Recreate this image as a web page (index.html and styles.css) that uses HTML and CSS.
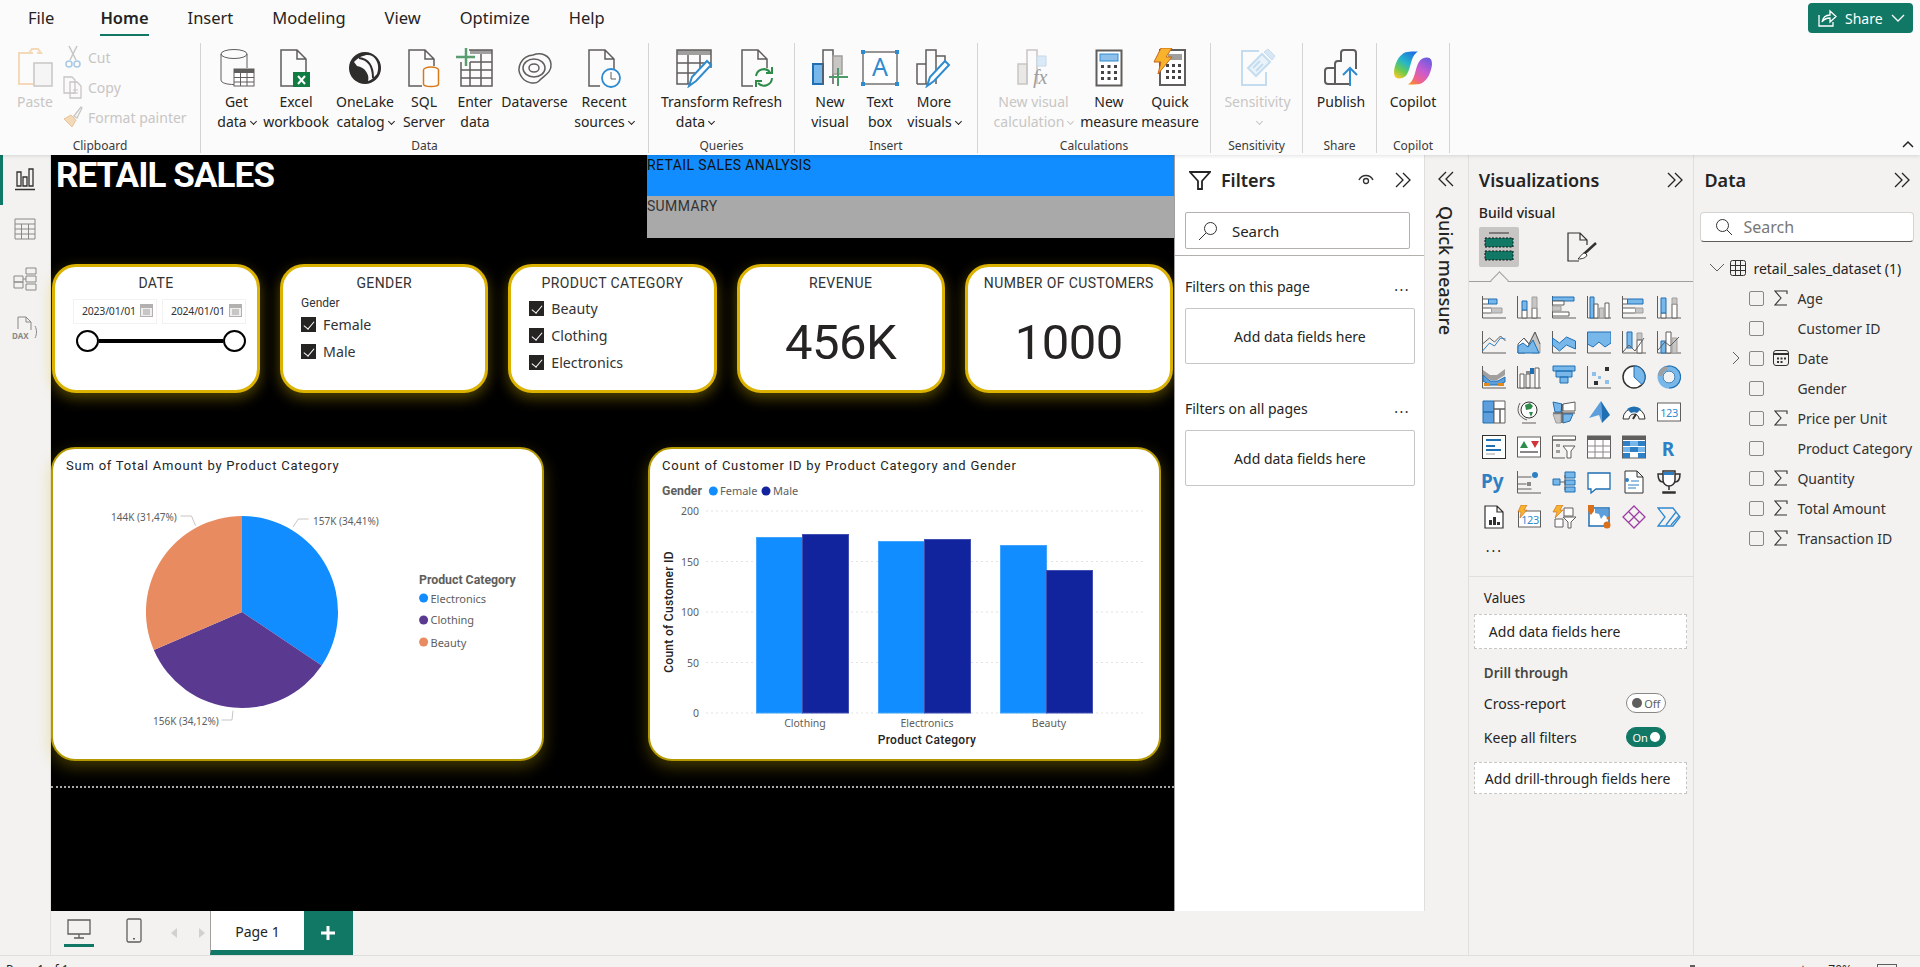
FILE: index.html
```html
<!DOCTYPE html>
<html lang="en">

<head>
  <meta charset="UTF-8">
  <title>Retail Sales - Power BI Desktop</title>
  <link rel="stylesheet" href="styles.css">
</head>

<body>
  <header class="ribbon">
    <nav class="tabs">
      <span class="tab tab-file">File</span>
      <span class="tab tab-active">Home</span>
      <span class="tab">Insert</span>
      <span class="tab">Modeling</span>
      <span class="tab">View</span>
      <span class="tab">Optimize</span>
      <span class="tab">Help</span>
      <button class="share">
        <svg width="20" height="20" viewBox="0 0 20 20"><path d="M2 7v11h14v-4M5 14c1-5 4-7 8-7V3l6 5.500-6 5.500v-4c-3 0-6 1-8 4z"/></svg>
        Share
        <svg width="14" height="10" viewBox="0 0 14 10"><path d="M1 2l6 6 6-6"/></svg>
      </button>
    </nav>

    <div class="groups">
      <section class="group group-clipboard">
        <div class="buttons">
          <div class="btn off">
            <svg class="ico" width="36" height="40" viewBox="0 0 36 40"><path d="M16 5h-4l3-4h6l3 4h-4M14 5H2v31h14" fill="none" stroke="#f3d9b8" stroke-width="2"/><rect x="17" y="15" width="18" height="23" fill="#f5f5f5" stroke="#c8c6c4" stroke-width="1.500"/></svg>
            <span>Paste</span>
          </div>
          <ul class="small-list off">
            <li><svg width="18" height="24" viewBox="0 0 18 24"><path d="M5 1l7 14M13 1L6 15" fill="none" stroke="#c8c6c4" stroke-width="1.500"/><circle cx="5" cy="19" r="3" fill="none" stroke="#a9c8e4" stroke-width="1.500"/><circle cx="13" cy="19" r="3" fill="none" stroke="#a9c8e4" stroke-width="1.500"/></svg>Cut</li>
            <li><svg width="20" height="24" viewBox="0 0 20 24"><path d="M1 2h8l3 3v13H1zM7 7h7l4 4v12H7z" fill="#fafafa" stroke="#c8c6c4" stroke-width="1.300"/><path d="M10 15h5M10 18h5" stroke="#c8c6c4"/></svg>Copy</li>
            <li><svg width="20" height="24" viewBox="0 0 20 24"><path d="M1 14l8 8 4-7-5-5z" fill="#f3d9b8" stroke="#e6c49c"/><path d="M11 11l7-9 1 1-5 10z" fill="#fafafa" stroke="#c8c6c4" stroke-width="1.300"/></svg>Format painter</li>
          </ul>
        </div>
        <h2>Clipboard</h2>
      </section>

      <section class="group group-data">
        <div class="buttons">
          <div class="btn">
            <svg class="ico" width="36" height="40" viewBox="0 0 36 40"><ellipse cx="15" cy="6" rx="13" ry="4.500" class="k"/><path class="k" d="M2 6v26c0 3 6 4.500 13 4.500M28 6v14"/><rect x="15" y="21" width="20" height="17" fill="#fff" stroke="#605e5c"/><path d="M15 21h20v4H15z" fill="#605e5c"/><path class="k" d="M15 29.500h20M15 34h20M21.500 25v13M28 25v13"/></svg>
            <span>Get</span><span>data<i class="caret"></i></span>
          </div>
          <div class="btn">
            <svg class="ico" width="36" height="40" viewBox="0 0 36 40"><path class="k2" d="M16 38H3V2h16l9 9v14M19 2v9h9"/><rect x="15" y="24" width="17" height="15" fill="#107c41"/><path d="M20 28l7 8M27 28l-7 8" stroke="#fff" stroke-width="2"/></svg>
            <span>Excel</span><span>workbook</span>
          </div>
          <div class="btn">
            <svg class="ico" width="36" height="40" viewBox="0 0 36 40"><circle cx="18" cy="20" r="16" fill="#2e2d2c"/><path d="M7 14c7-7 14-8 18-6 5 3 8 10 5 18-3 3-5 6-9 7 2-6-3-14-11-15z" fill="#fafafa"/><path d="M12 10c8 1 14 7 14 20" fill="none" stroke="#2e2d2c" stroke-width="2"/></svg>
            <span>OneLake</span><span>catalog<i class="caret"></i></span>
          </div>
          <div class="btn">
            <svg class="ico" width="36" height="40" viewBox="0 0 36 40"><path class="k2" d="M16 38H3V2h16l9 9v7M19 2v9h9"/><ellipse cx="25" cy="22" rx="7.500" ry="3" fill="#fff" stroke="#d87a1c" stroke-width="1.500"/><path d="M17.500 22v14c0 1.500 3 2.500 7.500 2.500s7.500-1 7.500-2.500V22" fill="#fff" stroke="#d87a1c" stroke-width="1.500"/></svg>
            <span>SQL</span><span>Server</span>
          </div>
          <div class="btn">
            <svg class="ico" width="40" height="40" viewBox="0 0 40 40"><path d="M15 2h22v4H15z" fill="#a19f9d"/><path class="k2" d="M6 14v24h31V2H14M6 22h31M6 30h31M15 14v24M26 6v32M15 14h22"/><path d="M11 0v18M1 9h19" stroke="#5a9e6f" stroke-width="2.500"/></svg>
            <span>Enter</span><span>data</span>
          </div>
          <div class="btn">
            <svg class="ico" width="40" height="40" viewBox="0 0 40 40"><path class="k2" d="M6 28C1 20 6 8 18 7c8-3 17 0 18 9 1 9-8 12-12 17-4 4-14 2-18-5z"/><ellipse class="k2" cx="19" cy="20" rx="11" ry="9"/><ellipse class="k2" cx="19" cy="20" rx="5" ry="4"/></svg>
            <span>Dataverse</span>
          </div>
          <div class="btn">
            <svg class="ico" width="36" height="40" viewBox="0 0 36 40"><path class="k2" d="M14 38H3V2h16l9 9v11M19 2v9h9"/><circle cx="25" cy="30" r="9" fill="#fff" stroke="#2e8bd0" stroke-width="1.800"/><path class="k" d="M25 24v7h5"/></svg>
            <span>Recent</span><span>sources<i class="caret"></i></span>
          </div>
        </div>
        <h2>Data</h2>
      </section>

      <section class="group group-queries">
        <div class="buttons">
          <div class="btn">
            <svg class="ico" width="40" height="40" viewBox="0 0 40 40"><path d="M2 2h34v5H2z" fill="#a19f9d"/><path class="k2" d="M14 36H2V2h34v18M2 15h34M2 25h22M13 7v29M25 7v14"/><path d="M14 38l3-9L32 13l4 4-15 16z" fill="#fff" stroke="#2e8bd0" stroke-width="2"/></svg>
            <span>Transform</span><span>data<i class="caret"></i></span>
          </div>
          <div class="btn">
            <svg class="ico" width="36" height="40" viewBox="0 0 36 40"><path class="k2" d="M14 38H3V2h16l9 9v9M19 2v9h9"/><path d="M17 28a8 8 0 0 1 14-4M33 30a8 8 0 0 1-14 5" fill="none" stroke="#2e8b4a" stroke-width="2"/><path d="M33 19v6h-6M17 39v-6h6" fill="none" stroke="#2e8b4a" stroke-width="2"/></svg>
            <span>Refresh</span>
          </div>
        </div>
        <h2>Queries</h2>
      </section>

      <section class="group group-insert">
        <div class="buttons">
          <div class="btn">
            <svg class="ico" width="38" height="40" viewBox="0 0 38 40"><path d="M2 16h10v20H2z" fill="#78b7ea" stroke="#1f6fb2" stroke-width="2"/><path class="k2" d="M12 36V2h10v34"/><path d="M22 8h9v18h-9z" fill="#c8c6c4" stroke="#a19f9d" stroke-width="1.500"/><path d="M27 20v18M18 29h19" stroke="#4c9a68" stroke-width="2"/></svg>
            <span>New</span><span>visual</span>
          </div>
          <div class="btn">
            <svg class="ico" width="40" height="38" viewBox="0 0 40 38"><rect x="3" y="3" width="34" height="32" fill="#fff" stroke="#605e5c" stroke-width="1.300"/><path d="M1 1h4v4H1zM35 1h4v4h-4zM1 33h4v4H1zM35 33h4v4h-4z" fill="#2e8bd0"/><text x="20" y="27" class="ico-a">A</text></svg>
            <span>Text</span><span>box</span>
          </div>
          <div class="btn">
            <svg class="ico" width="38" height="40" viewBox="0 0 38 40"><path class="k2" d="M2 36V16h9M11 36V2h10v34M21 8h9v10M2 36h14"/><path d="M12 38l3-9L30 13l4 4-15 16z" fill="#fff" stroke="#2e8bd0" stroke-width="2"/></svg>
            <span>More</span><span>visuals<i class="caret"></i></span>
          </div>
        </div>
        <h2>Insert</h2>
      </section>

      <section class="group group-calc">
        <div class="buttons">
          <div class="btn off">
            <svg class="ico" width="36" height="40" viewBox="0 0 36 40"><path d="M2 16h9v20H2z" fill="#e9e8e7" stroke="#c8c6c4" stroke-width="1.500"/><path d="M11 36V2h10v34" fill="none" stroke="#c8c6c4" stroke-width="1.500"/><path d="M21 8h9v10h-9z" fill="#d9e9f7" stroke="#c8d8e6"/><text x="17" y="36" class="ico-fx">fx</text></svg>
            <span>New visual</span><span>calculation<i class="caret"></i></span>
          </div>
          <div class="btn">
            <svg class="ico" width="28" height="38" viewBox="0 0 28 38"><rect x="1.500" y="1.500" width="25" height="35" fill="#fff" stroke="#605e5c" stroke-width="2"/><rect x="5" y="5" width="18" height="7" fill="#8ec0ea" stroke="#2e8bd0"/><path d="M6 16h3v3H6zM12.500 16h3v3h-3zM19 16h3v3h-3zM6 22h3v3H6zM12.500 22h3v3h-3zM19 22h3v3h-3zM6 28h3v3H6zM12.500 28h3v3h-3zM19 28h3v3h-3z" fill="#444"/></svg>
            <span>New</span><span>measure</span>
          </div>
          <div class="btn">
            <svg class="ico" width="34" height="40" viewBox="0 0 34 40"><rect x="7" y="2" width="25" height="35" fill="#fff" stroke="#605e5c" stroke-width="2"/><rect x="15" y="6" width="14" height="6" fill="#a19f9d"/><path d="M13 16h3v3h-3zM19 16h3v3h-3zM25 16h3v3h-3zM13 22h3v3h-3zM19 22h3v3h-3zM25 22h3v3h-3zM13 28h3v3h-3zM19 28h3v3h-3zM25 28h3v3h-3z" fill="#444"/><path d="M8 0h11l-6 9h6L5 26l3-12H1z" fill="#f7b32b" stroke="#c8641a"/></svg>
            <span>Quick</span><span>measure</span>
          </div>
        </div>
        <h2>Calculations</h2>
      </section>

      <section class="group group-sens">
        <div class="buttons">
          <div class="btn off">
            <svg class="ico" width="36" height="40" viewBox="0 0 36 40"><path d="M26 24v13H2V3h17" fill="none" stroke="#c4dcef" stroke-width="2"/><path d="M8 20L22 6l8 8-14 14z" fill="#eaf3fa" stroke="#c4dcef" stroke-width="2"/><path d="M24 4l4-3 7 7-3 4z" fill="#d7e7f4" stroke="#c4dcef"/><path d="M13 20l7-7M16 23l7-7" stroke="#c4dcef" stroke-width="2"/></svg>
            <span>Sensitivity</span><span><i class="caret"></i></span>
          </div>
        </div>
        <h2>Sensitivity</h2>
      </section>

      <section class="group group-share">
        <div class="buttons">
          <div class="btn">
            <svg class="ico" width="36" height="38" viewBox="0 0 36 38"><path class="k3" d="M12 35H5a3 3 0 0 1-3-3V22a3 3 0 0 1 3-3h7M12 35V15a3 3 0 0 1 3-3h3V4a3 3 0 0 1 3-3h9a3 3 0 0 1 3 3v16M12 35h14"/><path d="M27 37V19M20 26l7-7 7 7" fill="none" stroke="#2e8bd0" stroke-width="2"/></svg>
            <span>Publish</span>
          </div>
        </div>
        <h2>Share</h2>
      </section>

      <section class="group group-copilot">
        <div class="buttons">
          <div class="btn">
            <svg class="ico" width="38" height="33" viewBox="0 0 38 33">
              <defs>
                <linearGradient id="cpA" x1="0.800" y1="0" x2="0.200" y2="1"><stop offset="0" stop-color="#1b6fe0"/><stop offset="0.450" stop-color="#26b8c8"/><stop offset="0.750" stop-color="#6fcb4a"/><stop offset="1" stop-color="#f2c62c"/></linearGradient>
                <linearGradient id="cpB" x1="0.800" y1="0" x2="0.200" y2="1"><stop offset="0" stop-color="#6a5ce0"/><stop offset="0.450" stop-color="#c85bd0"/><stop offset="0.800" stop-color="#f0648c"/><stop offset="1" stop-color="#f78b2a"/></linearGradient>
              </defs>
              <path fill="url(#cpA)" d="M8 3c3-3 6-3 16-3-5 3-6 8-8 15-2 7-4 12-11 12-4 0-5-3-5-7C1 12 4 6 8 3z"/>
              <path fill="url(#cpB)" d="M30 30c-3 3-6 3-16 3 5-3 6-8 8-15 2-7 4-12 11-12 4 0 5 3 5 7-1 8-4 14-8 17z"/>
            </svg>
            <span>Copilot</span>
          </div>
        </div>
        <h2>Copilot</h2>
      </section>

      <svg class="collapse" width="14" height="10" viewBox="0 0 14 10"><path d="M2 7l5-5 5 5" fill="none" stroke="#252423" stroke-width="1.500"/></svg>
    </div>
  </header>

  <div class="workspace">
    <aside class="rail">
      <div class="rail-item rail-active">
        <svg width="22" height="24" viewBox="0 0 22 24"><path d="M1 22.500h20M3 19V5h4v14zM9 19V10h4v9zM15 19V2h4v17z" fill="none" stroke="#323130" stroke-width="1.300"/></svg>
      </div>
      <div class="rail-item">
        <svg width="22" height="22" viewBox="0 0 22 22"><path d="M1 1h20v20H1zM1 6h20M1 11h20M1 16h20M7.500 6v15M14.500 6v15" fill="none" stroke="#8a8886"/></svg>
      </div>
      <div class="rail-item">
        <svg width="24" height="24" viewBox="0 0 24 24"><path d="M1 9h9v6H1zM1 15h9v6H1zM13 1h10v6H13zM13 9h10v6H13zM13 17h10v6H13zM10 12h3" fill="none" stroke="#8a8886"/></svg>
      </div>
      <div class="rail-item">
        <svg width="26" height="26" viewBox="0 0 26 26"><path d="M6 13V1h8l5 5v8M14 1v5h5M23 10c2 4 2 8 0 12" fill="none" stroke="#8a8886"/><text x="0" y="23" class="dax">DAX</text></svg>
      </div>
    </aside>

    <div class="center">
      <div class="center-top">
        <main class="canvas">
          <div class="canvas-head">
            <h1>RETAIL SALES</h1>
            <div class="banners">
              <div class="banner banner-blue">RETAIL SALES ANALYSIS</div>
              <div class="banner banner-gray">SUMMARY</div>
            </div>
          </div>

          <div class="cards">
            <article class="card">
              <h3>DATE</h3>
              <div class="dates">
                <div class="date">2023/01/01<svg width="13" height="13" viewBox="0 0 13 13"><path d="M0 0h13v13H0z" fill="#b3b1af"/><path d="M1 4h11v8H1z" fill="#eee"/><path d="M3 6h7M3 8h7M3 10h7" stroke="#a19f9d"/></svg></div>
                <div class="date">2024/01/01<svg width="13" height="13" viewBox="0 0 13 13"><path d="M0 0h13v13H0z" fill="#b3b1af"/><path d="M1 4h11v8H1z" fill="#eee"/><path d="M3 6h7M3 8h7M3 10h7" stroke="#a19f9d"/></svg></div>
              </div>
              <div class="range"><i class="knob"></i><i class="track"></i><i class="knob"></i></div>
            </article>

            <article class="card">
              <h3>GENDER</h3>
              <div class="slicer-label">Gender</div>
              <ul class="checks">
                <li><i class="check"></i>Female</li>
                <li><i class="check"></i>Male</li>
              </ul>
            </article>

            <article class="card">
              <h3>PRODUCT CATEGORY</h3>
              <ul class="checks checks-top">
                <li><i class="check"></i>Beauty</li>
                <li><i class="check"></i>Clothing</li>
                <li><i class="check"></i>Electronics</li>
              </ul>
            </article>

            <article class="card">
              <h3>REVENUE</h3>
              <div class="kpi">456K</div>
            </article>

            <article class="card">
              <h3>NUMBER OF CUSTOMERS</h3>
              <div class="kpi">1000</div>
            </article>
          </div>

          <div class="charts">
            <article class="chart chart-pie">
              <svg width="489" height="310" viewBox="53 449 489 310">
                <text x="66" y="470" class="chart-title">Sum of Total Amount by Product Category</text>
                <path d="M242 612V516A96 96 0 0 1 321.700 665.500z" fill="#118dff"/>
                <path d="M242 612L321.700 665.500A96 96 0 0 1 153.800 650z" fill="#5a3a91"/>
                <path d="M242 612L153.800 650A96 96 0 0 1 242 516z" fill="#e98b60"/>
                <path class="leader" d="M293 527l5.300-8h10.300M180.500 516h11l4 9.700M221.500 720H232l1-9.300"/>
                <text x="313" y="525" class="pie-label">157K (34,41%)</text>
                <text x="111" y="521" class="pie-label">144K (31,47%)</text>
                <text x="153" y="725" class="pie-label">156K (34,12%)</text>
                <text x="419" y="584" class="legend-title">Product Category</text>
                <circle cx="423.600" cy="598" r="4.500" fill="#118dff"/>
                <circle cx="423.600" cy="620" r="4.500" fill="#5a3a91"/>
                <circle cx="423.600" cy="642" r="4.500" fill="#e98b60"/>
                <text x="430.500" y="603" class="legend-item">Electronics</text>
                <text x="430.500" y="624" class="legend-item">Clothing</text>
                <text x="430.500" y="647" class="legend-item">Beauty</text>
              </svg>
            </article>

            <article class="chart chart-bar">
              <svg width="509" height="310" viewBox="650 449 509 310">
                <text x="662" y="470" class="chart-title">Count of Customer ID by Product Category and Gender</text>
                <text x="662" y="495" class="legend-title">Gender</text>
                <circle cx="713.300" cy="491" r="4.500" fill="#118dff"/>
                <text x="720" y="495" class="legend-item">Female</text>
                <circle cx="766" cy="491" r="4.500" fill="#12239e"/>
                <text x="773" y="495" class="legend-item">Male</text>

                <path class="grid-line" d="M706.500 511H1146M706.500 561.500H1146M706.500 612H1146M706.500 662.500H1146M706.500 713H1146"/>
                <text x="699" y="515" class="axis-y">200</text>
                <text x="699" y="566" class="axis-y">150</text>
                <text x="699" y="616" class="axis-y">100</text>
                <text x="699" y="667" class="axis-y">50</text>
                <text x="699" y="717" class="axis-y">0</text>

                <rect class="bar-a" x="756.500" y="537.500" width="46" height="175.500"/>
                <rect class="bar-b" x="802.500" y="534.500" width="46" height="178.500"/>
                <rect class="bar-a" x="878.500" y="541.500" width="46" height="171.500"/>
                <rect class="bar-b" x="924.500" y="539.500" width="46" height="173.500"/>
                <rect class="bar-a" x="1000.500" y="545.500" width="46" height="167.500"/>
                <rect class="bar-b" x="1046.500" y="570.500" width="46" height="142.500"/>

                <text x="805" y="727" class="axis-x">Clothing</text>
                <text x="927" y="727" class="axis-x">Electronics</text>
                <text x="1049" y="727" class="axis-x">Beauty</text>
                <text x="927" y="744" class="axis-title">Product Category</text>
                <text transform="translate(673 612) rotate(-90)" class="axis-title">Count of Customer ID</text>
              </svg>
            </article>
          </div>

          <div class="page-rule"></div>
        </main>

        <aside class="filters">
          <div class="panel-head">
            <div class="filters-title">
              <svg width="22" height="19" viewBox="0 0 22 19"><path d="M1 1h20l-8 9v8h-4v-8z" fill="none" stroke="#252423" stroke-width="1.800"/></svg>
              <h2>Filters</h2>
            </div>
            <div class="head-tools">
              <svg width="16" height="12" viewBox="0 0 16 12"><path d="M1 6c3-6 11-6 14 0" fill="none" stroke="#323130" stroke-width="1.500"/><circle cx="8" cy="7" r="2.500" fill="none" stroke="#323130" stroke-width="1.300"/></svg>
              <svg class="chev" width="16" height="16" viewBox="0 0 16 16"><path d="M1 1l7 7-7 7M8 1l7 7-7 7"/></svg>
            </div>
          </div>
          <div class="filter-search">
            <svg width="20" height="20" viewBox="0 0 20 20"><circle cx="12.500" cy="7.500" r="6" fill="none" stroke="#323130"/><path d="M8 12l-7 7" stroke="#323130"/></svg>
            <span>Search</span>
          </div>
          <div class="filter-sep"></div>
          <div class="filter-head filter-head-first"><span>Filters on this page</span><span class="more">...</span></div>
          <div class="filter-box">Add data fields here</div>
          <div class="filter-head"><span>Filters on all pages</span><span class="more">...</span></div>
          <div class="filter-box">Add data fields here</div>
        </aside>
      </div>

      <div class="pagebar">
        <div class="view-btn view-active">
          <svg width="24" height="20" viewBox="0 0 24 20"><path d="M1 1h22v14H1zM12 15v4M7 19h10" fill="none" stroke="#605e5c" stroke-width="1.300"/></svg>
        </div>
        <div class="view-btn">
          <svg width="16" height="25" viewBox="0 0 16 25"><rect x="1" y="1" width="14" height="23" rx="1.500" fill="none" stroke="#605e5c" stroke-width="1.300"/><path d="M7 20h2v1.500H7z" fill="#605e5c"/></svg>
        </div>
        <i class="page-arrow page-prev"></i>
        <i class="page-arrow page-next"></i>
        <div class="page-tab">Page 1</div>
        <div class="page-add">
          <svg width="14" height="14" viewBox="0 0 14 14"><path d="M7 0v14M0 7h14" stroke="#fff" stroke-width="3"/></svg>
        </div>
      </div>
    </div>

    <aside class="quick">
      <svg class="chev" width="16" height="16" viewBox="0 0 16 16"><path d="M8 1L1 8l7 7M15 1L8 8l7 7"/></svg>
      <span class="quick-text">Quick measure</span>
    </aside>

    <aside class="viz">
      <div class="panel-head">
        <h2>Visualizations</h2>
        <svg class="chev" width="16" height="16" viewBox="0 0 16 16"><path d="M1 1l7 7-7 7M8 1l7 7-7 7"/></svg>
      </div>
      <div class="build-title">Build visual</div>
      <div class="build-tabs">
        <div class="build-tile">
          <svg width="30" height="30" viewBox="0 0 30 30"><path d="M5 1h20" stroke="#323130"/><path d="M1 6h28v9H1zM1 19h28v9H1z" fill="#117865" stroke="#111" stroke-dasharray="2 1.500"/></svg>
        </div>
        <svg class="build-format" width="30" height="30" viewBox="0 0 30 30"><path d="M12 29H1V1h12l7 7v5M13 1v7h7" fill="none" stroke="#323130" stroke-width="1.200"/><path d="M29 11L17 22" stroke="#323130" stroke-width="2.500"/><path d="M18 21c-3 0-4 3-7 6 4 0 8-1 9-4z" fill="#fff" stroke="#323130"/></svg>
      </div>
      <div class="build-line"><i></i></div>

      <div class="viz-grid">
        <svg viewBox="0 0 24 24"><path class="k" d="M.5 1v22H24"/><path class="w" d="M.5 4h6v5h-6zM.5 13h9v5h-9z"/><path class="b" d="M6.500 4H15v5H6.500z"/><path class="g" d="M9.500 13H20v5H9.500z"/></svg>
        <svg viewBox="0 0 24 24"><path class="k" d="M.5 1v22H24"/><path class="w" d="M5 15h5v8H5zM15 13h5v10h-5z"/><path class="b" d="M5 6h5v9H5z"/><path class="g" d="M15 2h5v11h-5z"/></svg>
        <svg viewBox="0 0 24 24"><path class="k" d="M.5 1v22H24"/><path class="b" d="M.5 2H22v4H.5z"/><path class="w" d="M.5 6H12v4H.5zM.5 17H17v4H.5z"/><path class="g" d="M.5 11H9v5H.5z"/></svg>
        <svg viewBox="0 0 24 24"><path class="k" d="M.5 1v22H24"/><path class="b" d="M3 2h4v21H3z"/><path class="w" d="M7 9h4v14H7zM18 8h4v15h-4z"/><path class="g" d="M12.500 13H17v10h-4.500z"/></svg>
        <svg viewBox="0 0 24 24"><path class="k" d="M.5 1v22H24"/><path class="w" d="M.5 4h5v5h-5zM.5 13h13v5H.5z"/><path class="b" d="M5.500 4H21v5H5.500z"/><path class="g" d="M13.500 13H21v5h-7.500z"/></svg>
        <svg viewBox="0 0 24 24"><path class="k" d="M.5 1v22H24"/><path class="w" d="M4 18h5v5H4zM15 9h5v14h-5z"/><path class="b" d="M4 3h5v15H4z"/><path class="g" d="M15 3h5v6h-5z"/></svg>

        <svg viewBox="0 0 24 24"><path class="k" d="M.5 1v22H24M.5 14l7-6 5 4 6-6 5 5"/><path class="l" d="M.5 21l7-8 5 3 6-8 5 1"/></svg>
        <svg viewBox="0 0 24 24"><path class="w" d="M1 14l6-6 5 6-4 9H1z"/><path class="g" d="M12 14l6-12 5 12v9h-8z"/><path class="b" d="M1 23v-7l5-3 5 4 5-7 6 13z"/><path class="k" d="M1 14l6-6 5 6 6-12 5 12"/></svg>
        <svg viewBox="0 0 24 24"><path class="k" d="M.5 1v22H24"/><path class="b" d="M.5 8l7 5 7-6 9 4v8l-9-4-7 6-7-6z"/></svg>
        <svg viewBox="0 0 24 24"><path class="k" d="M.5 2v21H24"/><path class="b" d="M.5 2H24v11l-6 4-6-5-6 5-5.500-3z"/></svg>
        <svg viewBox="0 0 24 24"><path class="k" d="M.5 1v22H24"/><path class="b" d="M5 2h5v16H5z"/><path class="g" d="M15 3h5v7h-5z"/><path class="w" d="M15 10h5v13h-5z"/><path class="k" d="M1 22l6-7 6 6 9-13"/></svg>
        <svg viewBox="0 0 24 24"><path class="k" d="M.5 1v22H24"/><path class="b" d="M4 11h5v12H4z"/><path class="w" d="M9 2h5v21H9z"/><path class="g" d="M15 8h5v15h-5z"/><path class="k" d="M1 20l7-8 5 4 9-9"/></svg>

        <svg viewBox="0 0 24 24"><path class="k" d="M.5 1v22H24"/><path d="M1 5l7 5 7 0 8-6v6l-8 5-7 0-7-5z" fill="#a19f9d"/><path d="M1 10l7 6 8 0 7-4v5l-7 3-8 0-7-4z" fill="#5c9fdc" stroke="#1f6fb2"/><path d="M2 18h6v3H2zM16 18h6v3h-6z" fill="#e08a20"/></svg>
        <svg viewBox="0 0 24 24"><path class="k" d="M.5 1v22H24"/><path class="w" d="M3 9h4v14H3z"/><path class="k" d="M9 9h4v14H9z"/><path d="M9 9h5V6H9z" fill="#8a8886"/><path d="M13 3h4v6h-4z" fill="#1f6fb2"/><path class="w" d="M18 3h4v20h-4z"/></svg>
        <svg viewBox="0 0 24 24"><path class="b" d="M1 1h22v5H1zM4 6h16v6H4zM8 12h8v6H8z"/></svg>
        <svg viewBox="0 0 24 24"><path class="k" d="M.5 1v22H24"/><path d="M18 2h4v4h-4zM7 16h4v4H7z" fill="#323130"/><path d="M5 7h4v4H5zM11 11h3v3h-3zM18 15h4v4h-4z" fill="#8ec0ea"/></svg>
        <svg viewBox="0 0 24 24"><circle cx="12" cy="12" r="11" fill="#fff" stroke="#323130" stroke-width="1.500"/><path class="b" d="M12 1a11 11 0 0 1 8 18.500L12 12z"/></svg>
        <svg viewBox="0 0 24 24"><circle cx="12" cy="12" r="9" fill="none" stroke="#78b7ea" stroke-width="5"/><path d="M2 9A11 11 0 1 1 12 23" fill="none" stroke="#1f6fb2" stroke-width="1.200"/><path d="M3 11a9 9 0 0 1 7-8" fill="none" stroke="#a19f9d" stroke-width="4"/><circle cx="12" cy="12" r="6" fill="none" stroke="#1f6fb2"/></svg>

        <svg viewBox="0 0 24 24"><path d="M1 1h11v11H1zM1 12h11v11H1z" fill="#5c9fdc" stroke="#1f6fb2"/><path class="w" d="M12 1h11v8H12zM12 9h6v14h-6zM18 9h5v14h-5z"/></svg>
        <svg viewBox="0 0 24 24"><circle cx="12" cy="10" r="8" fill="#fff" stroke="#323130"/><path d="M8 5l5-2 3 3-2 3-5 1zM12 12l4 0-2 5z" fill="#2e8b4a"/><path class="k" d="M3 3c-4 7-2 14 7 17M5 23h14"/></svg>
        <svg viewBox="0 0 24 24"><path class="g" d="M1 14l8 0 0 9-5 0z"/><path class="b" d="M1 2l9 2-1 8-6 0z"/><path class="w" d="M11 4l12-2v9H11z"/><path class="b" d="M11 14h10l-3 7-7 2z"/><path d="M10 4v19M1 13h22" stroke="#323130" fill="none"/></svg>
        <svg viewBox="0 0 24 24"><path d="M14 1L2 18l10-3 3 8z" fill="#5c9fdc"/><path d="M14 1l1 22 8-8z" fill="#1f6fb2"/></svg>
        <svg viewBox="0 0 24 24"><path d="M1 19a11 11 0 0 1 22 0h-6a5 5 0 0 0-10 0z" fill="#fff" stroke="#323130"/><path d="M5 9a11 11 0 0 1 14 0l-4 4a6 6 0 0 0-6 0z" fill="#1f6fb2"/><path d="M11 19l3-5" stroke="#323130" stroke-width="2"/></svg>
        <svg viewBox="0 0 24 24"><rect x=".5" y="3" width="23" height="18" fill="#fff" stroke="#605e5c"/><text x="12" y="17" class="ico-123">123</text></svg>

        <svg viewBox="0 0 24 24"><rect x=".5" y=".5" width="23" height="23" fill="#fff" stroke="#323130"/><path d="M4 5h15M4 11h9M4 15h15" stroke="#1f6fb2" stroke-width="2"/><path d="M4 19h9" stroke="#a19f9d"/></svg>
        <svg viewBox="0 0 24 24"><rect x=".5" y="2" width="23" height="20" fill="#fff" stroke="#605e5c"/><path d="M7 6l4 7H3z" fill="#2e8b4a"/><path d="M14 6h8l-4 7z" fill="#d13438"/><path d="M3 17h18" stroke="#8a8886" stroke-width="2"/></svg>
        <svg viewBox="0 0 24 24"><path class="w" d="M.5 1h23v4H.5z"/><path class="k" d="M13 23H.5V5M.5 5h23"/><path d="M4 9h4v3H4zM4 15h4v3H4z" fill="#a19f9d"/><path class="w" d="M11 11h12l-4 5v7h-4v-7z"/></svg>
        <svg viewBox="0 0 24 24"><rect x=".5" y="1" width="23" height="22" fill="#fff" stroke="#605e5c"/><path d="M.5 1h23v4H.5z" fill="#605e5c"/><path d="M.5 11h23M.5 17h23M8 5v18M16 5v18" stroke="#8a8886"/></svg>
        <svg viewBox="0 0 24 24"><rect x=".5" y="1" width="23" height="22" fill="#fff" stroke="#605e5c"/><path d="M.5 1h23v4H.5z" fill="#605e5c"/><path d="M1 6h7v5H1zM8 12h8v5H8zM16 6h7v5h-7zM1 18h7v5H1zM16 18h7v5h-7z" fill="#2e7fc4"/><path d="M8 6h8v5H8zM1 12h7v5H1zM16 12h7v5h-7z" fill="#78b7ea"/></svg>
        <svg viewBox="0 0 24 24"><text x="11" y="21" class="ico-r">R</text></svg>

        <svg viewBox="0 0 24 24"><text x="-1" y="18" class="ico-py">Py</text></svg>
        <svg viewBox="0 0 24 24"><path class="k" d="M.5 1v22H24M.5 7h14M.5 14h9M.5 19h14"/><circle cx="18" cy="5" r="3" fill="#2e7fc4"/><path d="M10 12h4v4h-4z" fill="#8a8886"/></svg>
        <svg viewBox="0 0 24 24"><path class="b" d="M1 9h7v6H1zM13 2h10v6H13zM13 10h10v5H13zM13 17h10v5H13z"/><path class="k" d="M8 12h5M13 5v15"/></svg>
        <svg viewBox="0 0 24 24"><path d="M1 3h22v16H9l-5 4v-4H1z" fill="#fff" stroke="#1f6fb2" stroke-width="1.300"/></svg>
        <svg viewBox="0 0 24 24"><path d="M3 1h12l6 6v16H3zM15 1v6h6" fill="#fff" stroke="#323130"/><circle cx="5" cy="10" r="2" fill="#2e7fc4"/><path d="M9 11h8M6 15h11M6 18h8" stroke="#2e7fc4"/></svg>
        <svg viewBox="0 0 24 24"><path d="M6 1h12v9a6 6 0 0 1-12 0z" fill="#fff" stroke="#323130" stroke-width="1.500"/><path d="M6 4H1c0 5 2 8 5 8M18 4h5c0 5-2 8-5 8M12 16v4M6 22h12v1H6z" fill="none" stroke="#323130" stroke-width="1.500"/><path d="M7 2h10v3H7z" fill="#2e7fc4"/></svg>

        <svg viewBox="0 0 24 24"><path d="M3 1h12l6 6v16H3zM15 1v6h6" fill="#fff" stroke="#323130" stroke-width="1.200"/><path d="M7 15h3v5H7zM11 12h3v8h-3zM15 17h3v3h-3z" fill="#323130"/></svg>
        <svg viewBox="0 0 24 24"><rect x="1.500" y="6" width="22" height="16" fill="#fff" stroke="#605e5c"/><text x="13" y="19" class="ico-123">123</text><path d="M4 0h6L7 5h3l-7 8 1-6H1z" fill="#f7b32b" stroke="#c8641a" stroke-width=".6"/></svg>
        <svg viewBox="0 0 24 24"><path class="w" d="M3 14h8v8H3zM12 3h9v8h-9z"/><path class="w" d="M11 12h13l-5 5v6h-3v-6z"/><path d="M5 0h6L8 5h3L3 13l2-6H1z" fill="#f7b32b" stroke="#c8641a" stroke-width=".6"/></svg>
        <svg viewBox="0 0 24 24"><path d="M2 3h20v18H2z" fill="#fff" stroke="#1f6fb2" stroke-width="1.500"/><path d="M8 4h13v9l-4-3-3 4-2-5-4-1z" fill="#5c9fdc"/><path d="M1 0h6v6l-3 4-3-4z" fill="#d8701c"/><circle cx="20" cy="20" r="3.500" fill="#d8701c"/><circle cx="21" cy="13" r="1.500" fill="#d8701c"/></svg>
        <svg viewBox="0 0 24 24"><path d="M12 1l11 11-11 11L1 12zM6.500 6.500l11 11M17.500 6.500l-11 11" fill="none" stroke="#9b3da3" stroke-width="1.300"/></svg>
        <svg viewBox="0 0 24 24"><path d="M1 3h15l7 9-7 9H1l7-9z" fill="none" stroke="#2e8bd0" stroke-width="1.300"/><path d="M9 20L19 7M14 20l8-9" stroke="#2e8bd0" stroke-width="1.300"/></svg>
      </div>
      <div class="viz-more">...</div>

      <div class="viz-sep"></div>
      <div class="well-title">Values</div>
      <div class="well well-values">Add data fields here</div>
      <div class="drill-title">Drill through</div>
      <div class="toggle-row toggle-row-first"><span>Cross-report</span><span class="toggle"><i></i>Off</span></div>
      <div class="toggle-row"><span>Keep all filters</span><span class="toggle toggle-on">On<i></i></span></div>
      <div class="well well-drill">Add drill-through fields here</div>
    </aside>

    <aside class="data">
      <div class="panel-head">
        <h2>Data</h2>
        <svg class="chev" width="16" height="16" viewBox="0 0 16 16"><path d="M1 1l7 7-7 7M8 1l7 7-7 7"/></svg>
      </div>
      <div class="data-search">
        <svg width="18" height="18" viewBox="0 0 18 18"><circle cx="7.500" cy="7.500" r="6" fill="none" stroke="#323130"/><path d="M12 12l5 5" stroke="#323130"/></svg>
        <span>Search</span>
      </div>
      <div class="tree-table">
        <svg width="16" height="10" viewBox="0 0 16 10"><path d="M1 1l7 7 7-7" fill="none" stroke="#605e5c"/></svg>
        <svg class="tree-table-icon" width="16" height="16" viewBox="0 0 16 16"><rect x=".5" y=".5" width="15" height="15" rx="2" fill="none" stroke="#323130"/><path d="M.5 5.500h15M.5 10.500h15M5.500 .5v15M10.500 .5v15" stroke="#323130"/></svg>
        <span>retail_sales_dataset (1)</span>
      </div>
      <ul class="fields">
        <li><i class="arrow-slot"></i><i class="box"></i><span class="field-icon"><svg width="14" height="16" viewBox="0 0 14 16"><path d="M13 4V1H1l6 7-6 7h12" fill="none" stroke="#323130" stroke-width="1.100"/></svg></span>Age</li>
        <li><i class="arrow-slot"></i><i class="box"></i><span class="field-icon"></span>Customer ID</li>
        <li><i class="arrow-slot"><svg width="9" height="14" viewBox="0 0 9 14"><path d="M1 1l6 6-6 6" fill="none" stroke="#605e5c"/></svg></i><i class="box"></i><span class="field-icon"><svg width="16" height="16" viewBox="0 0 16 16"><rect x=".5" y=".5" width="15" height="15" rx="2.500" fill="none" stroke="#323130"/><path d="M.5 4h15" stroke="#323130" stroke-width="2"/><path d="M4 7.500h2v2H4zM7.500 7.500h2v2h-2zM11 7.500h2v2h-2zM4 11h2v2H4zM7.500 11h2v2h-2z" fill="#323130"/></svg></span>Date</li>
        <li><i class="arrow-slot"></i><i class="box"></i><span class="field-icon"></span>Gender</li>
        <li><i class="arrow-slot"></i><i class="box"></i><span class="field-icon"><svg width="14" height="16" viewBox="0 0 14 16"><path d="M13 4V1H1l6 7-6 7h12" fill="none" stroke="#323130" stroke-width="1.100"/></svg></span>Price per Unit</li>
        <li><i class="arrow-slot"></i><i class="box"></i><span class="field-icon"></span>Product Category</li>
        <li><i class="arrow-slot"></i><i class="box"></i><span class="field-icon"><svg width="14" height="16" viewBox="0 0 14 16"><path d="M13 4V1H1l6 7-6 7h12" fill="none" stroke="#323130" stroke-width="1.100"/></svg></span>Quantity</li>
        <li><i class="arrow-slot"></i><i class="box"></i><span class="field-icon"><svg width="14" height="16" viewBox="0 0 14 16"><path d="M13 4V1H1l6 7-6 7h12" fill="none" stroke="#323130" stroke-width="1.100"/></svg></span>Total Amount</li>
        <li><i class="arrow-slot"></i><i class="box"></i><span class="field-icon"><svg width="14" height="16" viewBox="0 0 14 16"><path d="M13 4V1H1l6 7-6 7h12" fill="none" stroke="#323130" stroke-width="1.100"/></svg></span>Transaction ID</li>
      </ul>
    </aside>
  </div>

  <footer class="status">
    <span>Page 1 of 1</span>
    <span class="status-right">
      <i class="zoom-knob"></i>
      <span class="zoom-plus">+</span>
      <span>70%</span>
      <i class="fit-icon"></i>
    </span>
  </footer>
</body>

</html>
```

FILE: styles.css
```css
* {
  box-sizing: border-box;
}

body {
  margin: 0;
  width: 1920px;
  height: 967px;
  overflow: hidden;
  background: #f3f2f1;
  color: #252423;
  font-family: "Noto Sans", "Open Sans", sans-serif;
  font-size: 14px;
}

h1,
h2,
h3,
ul {
  margin: 0;
  padding: 0;
  list-style: none;
  font-weight: 400;
}

i {
  display: block;
}

svg {
  display: block;
  flex: none;
}

/* ribbon */
.ribbon {
  position: relative;
  z-index: 2;
  height: 155px;
  background: #fbfbfb;
  box-shadow: 0 1px 4px rgb(0 0 0 / 12%);
}

.tabs {
  display: flex;
  align-items: flex-start;
  gap: 39px;
  height: 42px;
  padding-left: 28px;
}

.tab {
  height: 36px;
  padding-top: 6px;
  font-size: 16.500px;
  line-height: 24px;
}

.tab-file {
  margin-right: 7px;
}

.tab-active {
  border-bottom: 2px solid #117865;
  font-weight: 600;
}

.share {
  display: flex;
  align-items: center;
  gap: 8px;
  width: 105px;
  height: 30px;
  margin: 3px 7px 0 auto;
  padding: 0 0 0 9px;
  border: 0;
  border-radius: 4px;
  background: #117865;
  color: #fff;
  font: 14px "Noto Sans", sans-serif;
}

.share svg {
  fill: none;
  stroke: #fff;
  stroke-width: 1.300;
}

.groups {
  position: relative;
  display: flex;
  height: 113px;
  padding-top: 1px;
}

.group {
  display: flex;
  flex-direction: column;
  height: 110px;
  border-right: 1px solid #d6d4d2;
}

.group h2 {
  height: 15px;
  font-size: 12px;
  line-height: 16px;
  text-align: center;
  color: #3b3a39;
}

.buttons {
  display: grid;
  flex: 1;
  grid-auto-flow: column;
  padding-top: 5px;
}

.group-clipboard { width: 201px; }
.group-data { width: 448px; }
.group-queries { width: 146px; }
.group-insert { width: 183px; }
.group-calc { width: 233px; }
.group-sens { width: 92px; }
.group-share { width: 74px; }
.group-copilot { width: 73px; }

.group-clipboard .buttons { grid-template-columns: 48px 1fr; padding-left: 11px; }
.group-data .buttons { grid-template-columns: 59px 60px 78px 40px 62px 57px 82px; padding-left: 6px; }
.group-queries .buttons { grid-template-columns: 80px 44px; padding-left: 6px; }
.group-insert .buttons { grid-template-columns: 60px 40px 68px; padding-left: 5px; }
.group-calc .buttons { grid-template-columns: 97px 54px 68px; padding-left: 7px; }
.group-sens .buttons { grid-template-columns: 81px; padding-left: 6px; }
.group-share .buttons { grid-template-columns: 60px; padding-left: 8px; }
.group-copilot .buttons { grid-template-columns: 56px; padding-left: 8px; }

.btn {
  display: flex;
  flex-direction: column;
  align-items: center;
  font-size: 14px;
  line-height: 20px;
  white-space: nowrap;
}

.ico {
  height: 40px;
  margin-bottom: 4px;
}

.off {
  color: #c8c6c4;
}

.caret {
  display: inline-block;
  width: 5px;
  height: 5px;
  margin: 0 0 3px 4px;
  border-right: 1px solid currentColor;
  border-bottom: 1px solid currentColor;
  transform: rotate(45deg);
}

.small-list {
  margin-top: -6px;
  padding: 0 0 0 4px;
  font-size: 14px;
  white-space: nowrap;
}

.small-list li {
  display: flex;
  align-items: center;
  gap: 5px;
  height: 30px;
}

.small-list svg {
  width: 20px;
}

.k {
  fill: none;
  stroke: #605e5c;
}

.k2 {
  fill: none;
  stroke: #605e5c;
  stroke-width: 1.500;
}

.k3 {
  fill: none;
  stroke: #605e5c;
  stroke-width: 2;
}

.ico-a {
  fill: #2e8bd0;
  font-size: 25px;
  text-anchor: middle;
}

.ico-fx {
  fill: #a19f9d;
  font: italic 20px "Liberation Serif", serif;
}

.collapse {
  position: absolute;
  right: 5px;
  bottom: 5px;
}

/* layout under the ribbon */
.workspace {
  display: flex;
  height: 800px;
}

.rail {
  width: 51px;
  border-right: 1px solid #e1dfdd;
}

.rail-item {
  display: flex;
  align-items: center;
  justify-content: center;
  height: 50px;
  padding-bottom: 2px;
}

.rail-active {
  border-left: 3px solid #117865;
  padding-right: 2px;
}

.dax {
  fill: #8a8886;
  font-size: 8px;
  font-weight: 700;
}

.center {
  display: flex;
  flex-direction: column;
  width: 1374px;
}

.center-top {
  display: flex;
  height: 756px;
}

/* report canvas */
.canvas {
  width: 1123px;
  padding: 0 1px;
  background: #000;
  font-family: Roboto, sans-serif;
}

.canvas-head {
  display: flex;
  justify-content: space-between;
  height: 83px;
  margin-right: -1px;
}

h1 {
  padding: 0 0 0 4px;
  color: #fff;
  font-size: 35px;
  font-weight: 700;
  line-height: 42px;
  letter-spacing: -.9px;
}

.banners {
  width: 527px;
}

.banner {
  height: 41px;
  padding-top: 1px;
  font-size: 14px;
  line-height: 18px;
  letter-spacing: .4px;
}

.banner-blue {
  background: #118dff;
  color: #111;
}

.banner-gray {
  height: 42px;
  background: #a9a9a9;
  color: #333;
}

.cards {
  display: flex;
  gap: 20px;
  margin-top: 26px;
}

.card {
  flex: 1;
  height: 129px;
  padding-top: 6px;
  border: 3px solid #dcb200;
  border-radius: 24px;
  background: #fff;
  box-shadow: 0 5px 14px rgb(225 190 0 / 38%);
  color: #333;
}

.card h3 {
  font-size: 14px;
  line-height: 20px;
  letter-spacing: .4px;
  text-align: center;
}

.dates {
  display: flex;
  gap: 5px;
  margin: 6px 0 0 18px;
}

.date {
  display: flex;
  align-items: center;
  justify-content: space-between;
  width: 84px;
  height: 25px;
  padding: 0 3px 2px 8px;
  border: 1px solid #f3f2f1;
  font: 10.500px "Noto Sans", sans-serif;
  letter-spacing: -.2px;
}

.range {
  display: flex;
  align-items: center;
  width: 170px;
  margin: 6px 0 0 21px;
}

.knob {
  width: 23px;
  height: 22px;
  border: 2px solid #000;
  border-radius: 50%;
  background: #fff;
}

.track {
  flex: 1;
  height: 4px;
  background: #000;
}

.slicer-label {
  margin: 2px 0 0 18px;
  font-size: 12px;
  line-height: 16px;
}

.checks {
  margin-left: 18px;
}

.checks-top {
  margin-top: 2px;
}

.checks li {
  display: flex;
  align-items: center;
  gap: 7px;
  height: 27px;
  font: 14.200px "Noto Sans", sans-serif;
}

.check {
  position: relative;
  width: 15px;
  height: 15px;
  background: #252423;
}

.check::after {
  content: "";
  position: absolute;
  left: 5px;
  top: 2px;
  width: 5px;
  height: 9px;
  border-right: 1px solid #fff;
  border-bottom: 1px solid #fff;
  transform: rotate(40deg);
}

.kpi {
  margin-top: 20px;
  color: #252423;
  font-size: 49px;
  line-height: 60px;
  letter-spacing: -.5px;
  text-align: center;
}

.charts {
  display: flex;
  gap: 104px;
  margin: 54px 0 0 -1px;
}

.chart {
  height: 314px;
  border: 2px solid #b49a00;
  border-radius: 24px;
  background: #fff;
  box-shadow: 0 6px 16px rgb(210 180 0 / 32%);
}

.chart-pie {
  width: 493px;
}

.chart-bar {
  width: 513px;
}

.chart svg {
  font-family: "Noto Sans", sans-serif;
}

.chart-title {
  fill: #252423;
  font: 13px Roboto, sans-serif;
  letter-spacing: .78px;
}

.leader {
  fill: none;
  stroke: #c8c6c4;
}

.pie-label {
  fill: #605e5c;
  font-size: 10px;
}

.legend-title {
  fill: #605e5c;
  font: 700 12.300px Roboto, sans-serif;
}

.legend-item {
  fill: #605e5c;
  font-size: 11px;
}

.grid-line {
  fill: none;
  stroke: #c8c6c4;
  stroke-dasharray: 1 4;
}

.axis-y {
  fill: #605e5c;
  font-size: 10.500px;
  text-anchor: end;
}

.axis-x {
  fill: #605e5c;
  font-size: 10.500px;
  text-anchor: middle;
}

.axis-title {
  fill: #252423;
  font: 500 12px Roboto, sans-serif;
  letter-spacing: .3px;
  text-anchor: middle;
}

.bar-a {
  fill: #118dff;
  stroke: #41a4ff;
}

.bar-b {
  fill: #12239e;
  stroke: #414fb1;
}

.page-rule {
  margin: 25px -1px 0;
  border-top: 2px dotted #a9a9a9;
}

/* filters pane */
.filters {
  width: 251px;
  border-left: 1px solid #a19f9d;
  border-right: 1px solid #e1dfdd;
  background: #fff;
}

.panel-head {
  display: flex;
  align-items: center;
  justify-content: space-between;
  height: 50px;
  padding: 0 10px;
}

.panel-head h2 {
  font-size: 18px;
  font-weight: 600;
}

.filters .panel-head {
  padding: 0 13px 0 14px;
}

.filters-title {
  display: flex;
  align-items: center;
  gap: 10px;
}

.head-tools {
  display: flex;
  align-items: center;
  gap: 21px;
}

.chev {
  fill: none;
  stroke: #252423;
  stroke-width: 1.300;
}

.filter-search {
  display: flex;
  align-items: center;
  gap: 14px;
  width: 225px;
  height: 37px;
  margin: 7px 0 0 10px;
  padding-left: 12px;
  border: 1px solid #b3b0ad;
  border-radius: 2px;
  font-size: 15px;
}

.filter-sep {
  margin-top: 6px;
  border-top: 1px solid #b3b0ad;
}

.filter-head {
  display: flex;
  justify-content: space-between;
  width: 225px;
  margin: 35px 0 11px 10px;
  font-size: 14px;
  line-height: 20px;
}

.filter-head-first {
  margin-top: 21px;
}

.more {
  line-height: 18px;
  letter-spacing: 1.500px;
}

.filter-box {
  display: flex;
  align-items: center;
  justify-content: center;
  width: 230px;
  height: 56px;
  margin-left: 10px;
  border: 1px solid #c8c6c4;
  border-radius: 2px;
}

/* quick measure strip */
.quick {
  display: flex;
  flex-direction: column;
  align-items: center;
  width: 44px;
  padding: 16px 0 0;
  border-right: 1px solid #e1dfdd;
}

.quick-text {
  margin-top: 19px;
  font-size: 18px;
  font-weight: 500;
  writing-mode: vertical-rl;
}

/* visualizations pane */
.viz {
  width: 226px;
  border-right: 1px solid #e1dfdd;
}

.viz .panel-head {
  padding: 0 10px;
}

.build-title {
  margin: 0 0 0 10px;
  font-size: 14px;
  font-weight: 500;
  line-height: 16px;
}

.build-tabs {
  display: flex;
  align-items: center;
  gap: 48px;
  margin: 6px 0 0 10px;
}

.build-tile {
  display: flex;
  align-items: center;
  justify-content: center;
  width: 40px;
  height: 40px;
  border-radius: 2px;
  background: #c8c6c4;
}

.build-line {
  position: relative;
  height: 15px;
  border-bottom: 1px solid #a19f9d;
}

.build-line i {
  position: absolute;
  left: 24px;
  bottom: -6px;
  width: 13px;
  height: 13px;
  border-top: 1px solid #a19f9d;
  border-left: 1px solid #a19f9d;
  background: #f3f2f1;
  transform: rotate(45deg);
}

.viz-grid {
  display: grid;
  grid-template-columns: repeat(6, 35px);
  grid-auto-rows: 35px;
  margin: 7px 0 0 8px;
  align-items: center;
  justify-items: center;
}

.viz-grid svg {
  width: 24px;
  height: 24px;
}

.viz-grid .w { fill: #fff; stroke: #605e5c; }
.viz-grid .b { fill: #78b7ea; stroke: #1f6fb2; }
.viz-grid .g { fill: #c8c6c4; stroke: #a19f9d; }
.viz-grid .l { fill: none; stroke: #2e7fc4; }

.ico-123 {
  fill: #2e8bd0;
  font-size: 11px;
  text-anchor: middle;
  letter-spacing: -.5px;
}

.ico-r {
  fill: #2e7fc4;
  font-size: 19px;
  font-weight: 700;
  text-anchor: middle;
}

.ico-py {
  fill: #2e7fc4;
  font-size: 19px;
  font-weight: 700;
}

.viz-more {
  margin: 4px 0 0 17px;
  font-size: 14px;
  line-height: 18px;
  letter-spacing: 2px;
}

.viz-sep {
  margin-top: 20px;
  border-top: 1px solid #e1dfdd;
}

.well-title {
  margin: 11px 0 0 15px;
  font-size: 13.500px;
  line-height: 20px;
}

.well {
  display: flex;
  align-items: center;
  width: 213px;
  margin-left: 5px;
  border: 1px dashed #c8c6c4;
  background: #fff;
  font-size: 14px;
}

.well-values {
  height: 35px;
  margin-top: 6px;
  padding-left: 14px;
}

.well-drill {
  height: 32px;
  margin-top: 8px;
  padding-left: 10px;
}

.drill-title {
  margin: 14px 0 0 15px;
  color: #484644;
  font-size: 13.500px;
  font-weight: 600;
  line-height: 20px;
}

.toggle-row {
  display: flex;
  align-items: center;
  justify-content: space-between;
  height: 34px;
  padding: 0 27px 0 15px;
  font-size: 14px;
}

.toggle-row-first {
  margin-top: 3px;
}

.toggle {
  display: flex;
  align-items: center;
  gap: 2px;
  width: 40px;
  height: 20px;
  padding: 0 5px;
  border: 1px solid #8a8886;
  border-radius: 10px;
  background: #fff;
  color: #605e5c;
  font-size: 11px;
}

.toggle i {
  width: 10px;
  height: 10px;
  border-radius: 50%;
  background: #605e5c;
}

.toggle-on {
  justify-content: space-between;
  border-color: #117865;
  background: #117865;
  color: #fff;
}

.toggle-on i {
  background: #fff;
}

/* data pane */
.data {
  width: 226px;
}

.data-search {
  display: flex;
  align-items: center;
  gap: 10px;
  width: 214px;
  height: 30px;
  margin: 7px 0 0 6px;
  padding-left: 14px;
  border: 1px solid #d6d4d2;
  border-bottom-color: #605e5c;
  border-radius: 4px;
  background: #fff;
  color: #797775;
  font-size: 16px;
}

.tree-table {
  display: flex;
  align-items: center;
  height: 30px;
  margin-top: 11px;
  padding-left: 15px;
  white-space: nowrap;
}

.tree-table-icon {
  margin: 0 7px 0 5px;
}

.fields li {
  display: flex;
  align-items: center;
  height: 30px;
  padding-left: 34px;
  white-space: nowrap;
  color: #323130;
}

.arrow-slot {
  display: flex;
  align-items: center;
  justify-content: center;
  width: 16px;
  margin-right: 5px;
}

.box {
  width: 15px;
  height: 15px;
  border: 1px solid #8a8886;
  border-radius: 2px;
}

.field-icon {
  display: flex;
  align-items: center;
  justify-content: center;
  width: 33px;
}

/* status bar */
.status {
  display: flex;
  justify-content: space-between;
  height: 12px;
  overflow: hidden;
  padding: 7px 23px 0 6px;
  border-top: 1px solid #e1dfdd;
  font-size: 12px;
  line-height: 14px;
}

.status-right {
  display: flex;
  align-items: flex-start;
  gap: 22px;
}

.zoom-knob {
  width: 5px;
  height: 12px;
  margin: 2px 82px 0 0;
  background: #605e5c;
}

.zoom-plus {
  margin-top: -1px;
}

.fit-icon {
  width: 20px;
  height: 14px;
  margin: 1px 0 0 3px;
  border: 1px solid #605e5c;
}

/* page tabs */
.pagebar {
  display: flex;
  align-items: stretch;
  height: 44px;
  padding-left: 13px;
}

.view-btn {
  display: flex;
  align-items: center;
  justify-content: center;
  width: 30px;
  height: 36px;
  margin-right: 25px;
  padding-top: 3px;
}

.view-active {
  border-bottom: 3px solid #117865;
}

.page-arrow {
  width: 0;
  height: 0;
  margin: 17px 0 0;
  border-top: 5px solid transparent;
  border-bottom: 5px solid transparent;
}

.page-prev {
  margin-left: -3px;
  border-right: 6px solid #d2d0ce;
}

.page-next {
  margin-left: 22px;
  margin-right: 5px;
  border-left: 6px solid #d2d0ce;
}

.page-tab {
  display: flex;
  align-items: center;
  justify-content: center;
  width: 94px;
  padding-top: 2px;
  border-left: 1px solid #a19f9d;
  border-bottom: 5px solid #117865;
  background: #fff;
  font-size: 14px;
}

.page-add {
  display: flex;
  align-items: center;
  justify-content: center;
  width: 49px;
  background: #117865;
}
```
